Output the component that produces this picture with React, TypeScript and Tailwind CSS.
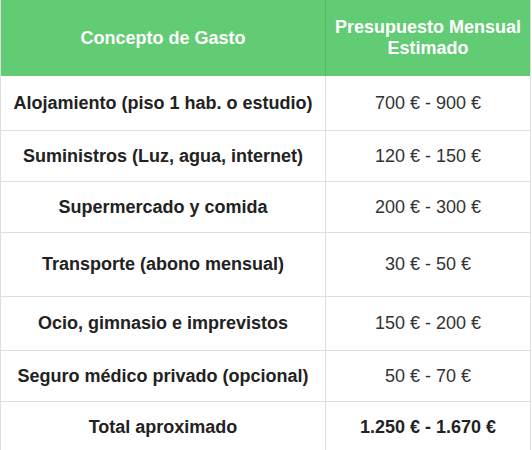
const rows = [
  { concept: 'Alojamiento (piso 1 hab. o estudio)', amount: '700 € - 900 €', h: 'h-[55px]' },
  { concept: 'Suministros (Luz, agua, internet)', amount: '120 € - 150 €', h: 'h-[51px]' },
  { concept: 'Supermercado y comida', amount: '200 € - 300 €', h: 'h-[51px]' },
  { concept: 'Transporte (abono mensual)', amount: '30 € - 50 €', h: 'h-[64px]' },
  { concept: 'Ocio, gimnasio e imprevistos', amount: '150 € - 200 €', h: 'h-[54px]' },
  { concept: 'Seguro médico privado (opcional)', amount: '50 € - 70 €', h: 'h-[51px]' },
];

export default function App() {
  return (
    <div className="w-[532px] h-[450px] overflow-hidden bg-white font-['Liberation_Sans',Arial,sans-serif] text-[18px]">
      <div className="w-[531px] border-l border-r border-[#dedede]">
        {/* Header */}
        <div className="flex h-[76px] bg-[#62cc74] text-white font-bold leading-[21px]">
          <div className="w-[325px] shrink-0 flex items-center justify-center text-center border-r border-[#57bb68]">
            Concepto de Gasto
          </div>
          <div className="flex-1 flex items-center justify-center text-center px-2">
            Presupuesto Mensual
            <br />
            Estimado
          </div>
        </div>

        {rows.map((row, i) => (
          <div key={i} className={`flex border-b border-[#dedede] ${row.h}`}>
            <div className="w-[325px] shrink-0 flex items-center justify-center text-center font-bold text-[#222] border-r border-[#dedede]">
              {row.concept}
            </div>
            <div className="flex-1 flex items-center justify-center text-center text-[#333]">
              {row.amount}
            </div>
          </div>
        ))}

        <div className="flex h-[52px] border-b border-[#dedede]">
          <div className="w-[325px] shrink-0 flex items-center justify-center font-bold text-[#222] border-r border-[#dedede]">
            Total aproximado
          </div>
          <div className="flex-1 flex items-center justify-center font-bold text-[#222]">
            1.250 € - 1.670 €
          </div>
        </div>
      </div>
    </div>
  );
}
